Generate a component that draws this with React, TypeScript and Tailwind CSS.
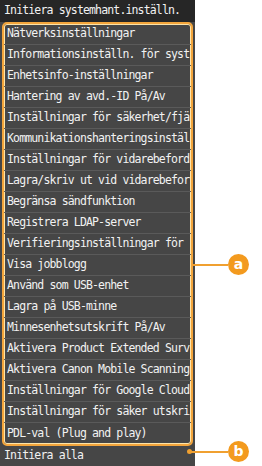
import React from 'react';

const items = [
  'Nätverksinställningar',
  'Informationsinställn. för syst',
  'Enhetsinfo-inställningar',
  'Hantering av avd.-ID På/Av',
  'Inställningar för säkerhet/fjä',
  'Kommunikationshanteringsinstäl',
  'Inställningar för vidarebeford',
  'Lagra/skriv ut vid vidarebefor',
  'Begränsa sändfunktion',
  'Registrera LDAP-server',
  'Verifieringsinställningar för',
  'Visa jobblogg',
  'Använd som USB-enhet',
  'Lagra på USB-minne',
  'Minnesenhetsutskrift På/Av',
  'Aktivera Product Extended Surv',
  'Aktivera Canon Mobile Scanning',
  'Inställningar för Google Cloud',
  'Inställningar för säker utskri',
  'PDL-val (Plug and play)',
];

const mono = "font-['DejaVu_Sans_Mono',monospace] text-[11.5px] tracking-[-0.85px] whitespace-nowrap overflow-hidden";

function Callout({ letter, top, left }: { letter: string; top: number; left: number }) {
  return (
    <div className="absolute flex items-center" style={{ top, left }}>
      <div className="h-[2px] bg-[#f0a030]" style={{ width: 228 - left }} />
      <div className="w-[21px] h-[21px] rounded-full bg-[#f39a1e] flex items-center justify-center text-white font-['DejaVu_Sans',sans-serif] text-[14px] font-bold leading-none pb-[2px]">
        {letter}
      </div>
    </div>
  );
}

export default function App() {
  return (
    <div className="relative w-[262px] h-[466px] bg-white flex">
      <div className="w-[195px] h-full bg-[#464646] flex flex-col text-[#f2f2f2]">
        <div className={`h-[22px] bg-[#262626] flex items-center pl-[4px] ${mono}`}>
          Initiera systemhant.inställn.
        </div>
        <div className="mx-[2px] border-2 border-[#f3a53c] rounded-[5px] shadow-[inset_0_0_0_1px_#fde4a8] overflow-hidden">
          {items.map((it, i) => (
            <div
              key={i}
              className={`h-[21px] flex items-center pl-[3px] pr-[1px] ${mono} ${i < items.length - 1 ? 'border-b border-[#5a5a5a]' : ''}`}
            >
              {it}
            </div>
          ))}
        </div>
        <div className={`h-[20px] flex items-center pl-[4px] ${mono}`}>Initiera alla</div>
      </div>
      <Callout letter="a" top={254} left={193} />
      <div className="absolute w-[5px] h-[5px] rounded-full bg-[#f0a030]" style={{ top: 449, left: 187 }} />
      <Callout letter="b" top={441} left={190} />
    </div>
  );
}
